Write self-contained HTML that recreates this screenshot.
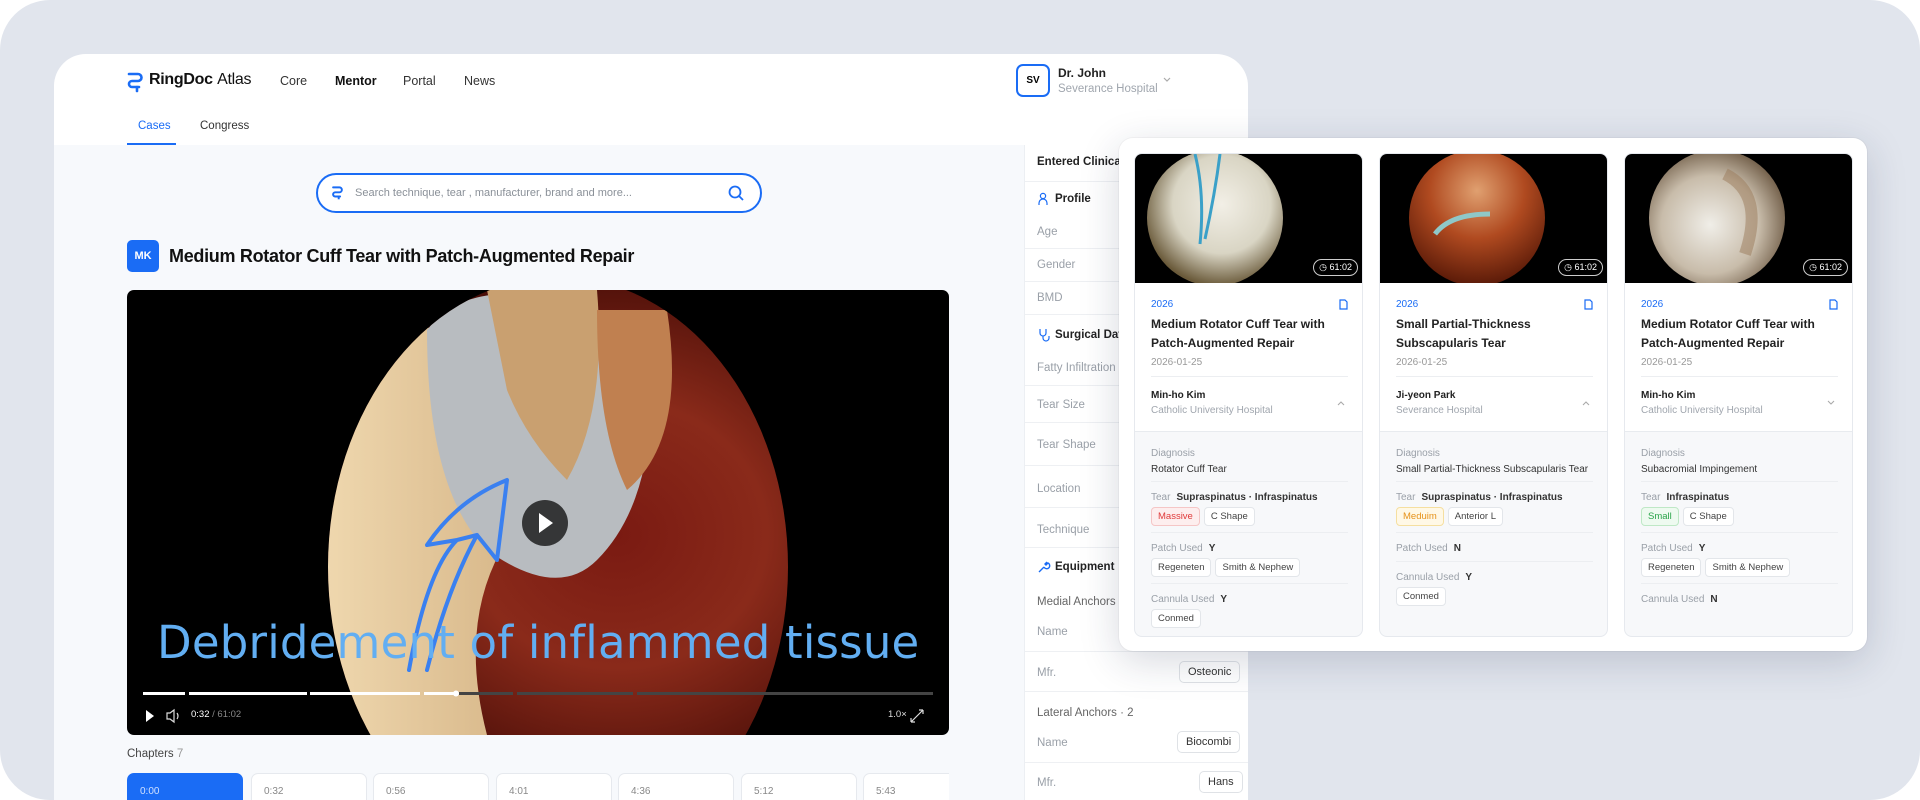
<!DOCTYPE html>
<html><head><meta charset="utf-8"><style>
*{box-sizing:border-box;margin:0;padding:0}
html,body{width:1920px;height:800px;overflow:hidden}
body{background:#fff;font-family:"Liberation Sans",sans-serif;position:relative}
.a{position:absolute}
.bg{left:0;top:0;width:1920px;height:800px;background:#e1e5ed;border-radius:50px}
.main{left:54px;top:54px;width:1194px;height:746px;background:#fff;border-radius:32px 32px 0 0;overflow:hidden}
.nav{font-size:12.5px;color:#333}
.content{left:0;top:91px;width:1194px;height:655px;background:#f7f9fc}
.side{left:970px;top:91px;width:224px;height:655px;background:#fff;border-left:1px solid #eceff3;overflow:hidden}
.srow{position:absolute;left:12px;font-size:11.5px;color:#9aa0a8}
.shd{position:absolute;left:12px;font-size:11.5px;color:#222;font-weight:bold}
.line{position:absolute;left:0;width:224px;height:1px;background:#eef0f3}
.tag{display:inline-block;border:1px solid #e3e6ea;background:#fff;border-radius:4px;font-size:9.5px;color:#444;padding:3px 6px;margin-right:4px}
.stag{position:absolute;border:1px solid #dfe2e6;background:#fff;border-radius:5px;font-size:11px;color:#333;padding:4px 8px}
.panel{left:1119px;top:138px;width:748px;height:513px;background:#fff;border-radius:14px;box-shadow:0 10px 40px rgba(30,40,70,.18),0 0 0 1px rgba(0,0,0,.03)}
.card{position:absolute;top:15px;width:229px;height:484px;border:1px solid #e6e9ee;border-radius:8px;overflow:hidden;background:#f7f8fa}
.img{position:absolute;left:0;top:0;width:229px;height:129px;background:#000;overflow:hidden}
.dur{position:absolute;right:6px;bottom:7px;border:1px solid #ccc;border-radius:9px;color:#fff;font-size:9px;padding:2px 5px;background:rgba(0,0,0,.5)}
.top{position:absolute;left:0;top:129px;width:229px;height:149px;background:#fff;border-bottom:1px solid #e8ebef}
.c{position:absolute;left:16px;font-size:10px}
.lab{color:#9aa0a8}
.val{color:#333;font-weight:bold;margin-left:6px}
.sep{position:absolute;left:16px;width:197px;height:1px;background:#eceef1}
.chs{position:absolute;left:73px;top:719px;width:822px;height:27px;overflow:hidden}
.ch{position:absolute;top:0;width:116px;height:34px;border:1px solid #e6e9ee;border-radius:7px;background:#fff;font-size:10px;color:#888;padding:12px 12px}
</style></head><body>
<div class="a bg"></div>
<div class="a main">
  <svg class="a" style="left:72px;top:17px" width="20" height="22" viewBox="0 0 20 22"><path d="M3 3h9a3.5 3.5 0 0 1 0 7H6a3 3 0 0 0 0 6h7" fill="none" stroke="#1a6cf5" stroke-width="2.6" stroke-linecap="round"/><path d="M11 16v4" stroke="#1a6cf5" stroke-width="2.6" stroke-linecap="round"/></svg>
  <div class="a" style="left:95px;top:17px;font-size:16px;color:#111"><b style="letter-spacing:-.3px">RingDoc</b> <span style="font-weight:normal;letter-spacing:-.3px">Atlas</span></div>
  <div class="a nav" style="left:226px;top:20px">Core</div>
  <div class="a nav" style="left:281px;top:20px;font-weight:bold;color:#111">Mentor</div>
  <div class="a nav" style="left:349px;top:20px">Portal</div>
  <div class="a nav" style="left:410px;top:20px">News</div>
  <div class="a" style="left:962px;top:10px;width:34px;height:33px;border:2px solid #1a6cf5;border-radius:7px;font-size:10px;font-weight:bold;text-align:center;line-height:29px">SV</div>
  <div class="a" style="left:1004px;top:12px;font-size:12px;font-weight:bold;color:#222">Dr. John</div>
  <div class="a" style="left:1004px;top:29px;font-size:11.5px;color:#a0a6ae">Severance Hospital</div>
  <svg class="a" style="left:1108px;top:22px" width="10" height="8"><path d="M2 2l3 3 3-3" fill="none" stroke="#aaa" stroke-width="1.2"/></svg>
  <div class="a" style="left:84px;top:66px;font-size:11.5px;color:#1a6cf5">Cases</div>
  <div class="a" style="left:73px;top:89px;width:49px;height:2px;background:#1a6cf5"></div>
  <div class="a" style="left:146px;top:66px;font-size:11.5px;color:#333">Congress</div>

  <div class="a content"></div>
  <div class="a" style="left:262px;top:119px;width:446px;height:40px;border:2px solid #1a6cf5;border-radius:20px;background:#fff"></div>
  <svg class="a" style="left:277px;top:130px" width="14" height="18" viewBox="0 0 20 22"><path d="M3 3h9a3.5 3.5 0 0 1 0 7H6a3 3 0 0 0 0 6h7" fill="none" stroke="#1a6cf5" stroke-width="2.8" stroke-linecap="round"/><path d="M11 16v4" stroke="#1a6cf5" stroke-width="2.8"/></svg>
  <div class="a" style="left:301px;top:133px;font-size:11px;color:#8a9098">Search technique, tear , manufacturer, brand and more...</div>
  <svg class="a" style="left:673px;top:130px" width="18" height="18"><circle cx="8" cy="8" r="5.5" fill="none" stroke="#1a6cf5" stroke-width="1.8"/><path d="M12 12l4 4" stroke="#1a6cf5" stroke-width="1.8"/></svg>
  <div class="a" style="left:73px;top:186px;width:32px;height:32px;background:#1a6cf5;border-radius:5px;color:#fff;font-size:11px;font-weight:bold;text-align:center;line-height:32px">MK</div>
  <div class="a" style="left:115px;top:192px;font-size:18px;font-weight:bold;color:#111;letter-spacing:-.3px">Medium Rotator Cuff Tear with Patch-Augmented Repair</div>
  <div class="a" style="left:73px;top:236px;width:822px;height:445px;background:#000;border-radius:7px;overflow:hidden">
    <svg width="822" height="445" style="position:absolute;left:0;top:0">
      <defs>
        <radialGradient id="v" cx="0.6" cy="0.55" r="0.6"><stop offset="0" stop-color="#7a1a12"/><stop offset=".5" stop-color="#8a2a1a"/><stop offset="1" stop-color="#4a0e08"/></radialGradient>
        <linearGradient id="w" x1="0" y1="0" x2="1" y2="0"><stop offset="0" stop-color="#f0d9b0"/><stop offset="1" stop-color="#d8b88a"/></linearGradient>
        <clipPath id="cc"><ellipse cx="431" cy="277" rx="230" ry="290"/></clipPath>
      </defs>
      <g clip-path="url(#cc)">
        <rect x="190" y="0" width="500" height="445" fill="url(#v)"/>
        <path d="M190 60 Q300 0 360 80 L380 250 Q330 330 360 445 L190 445Z" fill="url(#w)"/>
        <path d="M300 40 Q340 -10 420 10 L520 30 Q540 200 470 270 Q430 310 360 260 Q300 200 300 40Z" fill="#b8bcc0"/>
        <path d="M360 0 L470 0 Q480 120 440 190 Q400 150 380 100Z" fill="#c9a070"/>
        <path d="M470 20 L540 20 Q560 150 500 200 Q470 140 470 20Z" fill="#c08050"/>
      </g>
      <path d="M282 380 Q300 280 330 250 L300 255 Q330 210 380 190 L370 270 L350 245 Q320 300 300 380 M350 245 L330 250" fill="none" stroke="#3a80f0" stroke-width="4" stroke-linecap="round" stroke-linejoin="round"/>
      <circle cx="418" cy="233" r="23" fill="rgba(20,20,20,.8)"/>
      <path d="M412 223 L426 233 L412 243Z" fill="#fff"/>
      <rect x="16" y="402" width="42" height="3" fill="#fff"/><rect x="62" y="402" width="118" height="3" fill="#fff"/><rect x="183" y="402" width="110" height="3" fill="#fff"/><rect x="297" y="402" width="32" height="3" fill="#fff"/>
      <circle cx="329" cy="403.5" r="3" fill="#fff"/>
      <rect x="332" y="402" width="54" height="3" fill="#444"/><rect x="390" y="402" width="116" height="3" fill="#444"/><rect x="510" y="402" width="296" height="3" fill="#444"/>
      <path d="M19 420l8 6-8 6z" fill="#fff"/>
      <path d="M40 423h3l4-3v12l-4-3h-3z" fill="none" stroke="#ddd" stroke-width="1.2"/>
      <path d="M50 423q2 3 0 6" fill="none" stroke="#ddd" stroke-width="1.2"/>
      <path d="M796 420l-6 6m6-6v4m0-4h-4M784 432l6-6m-6 6v-4m0 4h4" stroke="#ddd" stroke-width="1.2" fill="none"/>
    </svg>
    <div class="a" style="left:30px;top:326px;font-family:'DejaVu Sans',sans-serif;font-size:45px;color:#62aef2;letter-spacing:.2px">Debridement of inflammed tissue</div>
    <div class="a" style="left:64px;top:419px;font-size:9.5px;color:#fff">0:32 <span style="color:#888">/ 61:02</span></div>
    <div class="a" style="left:761px;top:419px;font-size:9.5px;color:#ddd">1.0×</div>
  </div>
  <div class="a" style="left:73px;top:694px;font-size:11.5px;color:#444">Chapters <span style="color:#999">7</span></div>
  <div class="chs">
    <div class="ch" style="left:0;background:#1a6cf5;color:#cfe0ff;border-color:#1a6cf5">0:00</div>
    <div class="ch" style="left:124px">0:32</div>
    <div class="ch" style="left:246px">0:56</div>
    <div class="ch" style="left:369px">4:01</div>
    <div class="ch" style="left:491px">4:36</div>
    <div class="ch" style="left:614px">5:12</div>
    <div class="ch" style="left:736px">5:43</div>
  </div>

  <div class="a side">
    <div class="shd" style="top:11px">Entered Clinical Data</div>
    <div class="line" style="top:36px"></div>
    <svg class="a" style="left:12px;top:47px" width="12" height="14"><circle cx="6" cy="4" r="2.6" fill="none" stroke="#1a6cf5" stroke-width="1.2"/><path d="M2 13v-2a4 4 0 0 1 8 0v2" fill="none" stroke="#1a6cf5" stroke-width="1.2"/></svg>
    <div class="shd" style="left:30px;top:48px">Profile</div>
    <div class="srow" style="top:81px">Age</div><div class="line" style="top:103px"></div>
    <div class="srow" style="top:114px">Gender</div><div class="line" style="top:136px"></div>
    <div class="srow" style="top:147px">BMD</div><div class="line" style="top:169px"></div>
    <svg class="a" style="left:12px;top:183px" width="14" height="14"><path d="M3 1v4a3 3 0 0 0 6 0V1M6 8v2a3 3 0 0 0 6 0V8" fill="none" stroke="#1a6cf5" stroke-width="1.2"/></svg>
    <div class="shd" style="left:30px;top:184px">Surgical Data</div>
    <div class="srow" style="top:217px">Fatty Infiltration</div><div class="line" style="top:240px"></div>
    <div class="srow" style="top:254px">Tear Size</div><div class="line" style="top:277px"></div>
    <div class="srow" style="top:294px">Tear Shape</div><div class="line" style="top:320px"></div>
    <div class="srow" style="top:338px">Location</div><div class="line" style="top:362px"></div>
    <div class="srow" style="top:379px">Technique</div><div class="line" style="top:402px"></div>
    <svg class="a" style="left:12px;top:415px" width="14" height="14"><path d="M2 12l5-5M7 7a3 3 0 1 0 4-4l-2 2-1-1 2-2" fill="none" stroke="#1a6cf5" stroke-width="1.4"/></svg>
    <div class="shd" style="left:30px;top:416px">Equipment</div>
    <div class="srow" style="top:451px;color:#666">Medial Anchors · 3</div>
    <div class="srow" style="top:481px">Name</div><div class="line" style="top:506px"></div>
    <div class="srow" style="top:522px">Mfr.</div><div class="stag" style="left:154px;top:516px">Osteonic</div>
    <div class="line" style="top:546px"></div>
    <div class="srow" style="top:562px;color:#666">Lateral Anchors · 2</div>
    <div class="srow" style="top:592px">Name</div><div class="stag" style="left:152px;top:586px">Biocombi</div>
    <div class="line" style="top:617px"></div>
    <div class="srow" style="top:632px">Mfr.</div><div class="stag" style="left:174px;top:626px">Hans</div>
  </div>
</div>

<div class="a panel">
  <div class="card" style="left:15px">
    <div class="img"><svg width="229" height="129"><defs><radialGradient id="g1" cx=".55" cy=".4" r=".6"><stop offset="0" stop-color="#f2efe6"/><stop offset=".6" stop-color="#d9d5c4"/><stop offset="1" stop-color="#6a5a3a"/></radialGradient></defs><circle cx="80" cy="64" r="68" fill="url(#g1)"/><path d="M60 0 Q70 40 65 90 M85 0 Q80 40 70 85" stroke="#3aa0c8" stroke-width="3" fill="none"/></svg><div class="dur">◷ 61:02</div></div>
    <div class="top">
      <div class="c" style="top:16px;color:#1a6cf5">2026</div>
      <svg class="a" style="right:16px;top:16px" width="9" height="11"><path d="M1 1h5l2 2v7H1z" fill="none" stroke="#1a6cf5" stroke-width="1.2"/></svg>
      <div class="c" style="top:32px;font-size:12px;font-weight:bold;color:#222;line-height:19px;width:200px">Medium Rotator Cuff Tear with Patch-Augmented Repair</div>
      <div class="c" style="top:74px;color:#999">2026-01-25</div>
      <div class="sep" style="top:93px"></div>
      <div class="c" style="top:107px;font-weight:bold;color:#222">Min-ho Kim</div>
      <div class="c" style="top:122px;color:#a0a6ae">Catholic University Hospital</div>
      <svg class="a" style="right:18px;top:116px" width="10" height="8"><path d="M2 6l3-3 3 3" fill="none" stroke="#aaa" stroke-width="1.1"/></svg>
    </div>
    <div class="c lab" style="top:294px">Diagnosis</div>
    <div class="c" style="top:310px;color:#333">Rotator Cuff Tear</div>
    <div class="sep" style="top:327px"></div>
    <div class="c" style="top:338px"><span class="lab">Tear</span><span class="val">Supraspinatus · Infraspinatus</span></div>
    <div class="c" style="top:353px"><span class="tag" style="background:#fdeeee;border-color:#f5c6c6;color:#e03a3a">Massive</span><span class="tag">C Shape</span></div>
    <div class="sep" style="top:378px"></div>
    <div class="c" style="top:389px"><span class="lab">Patch Used</span><span class="val">Y</span></div>
    <div class="c" style="top:404px"><span class="tag">Regeneten</span><span class="tag">Smith &amp; Nephew</span></div>
    <div class="sep" style="top:429px"></div>
    <div class="c" style="top:440px"><span class="lab">Cannula Used</span><span class="val">Y</span></div>
    <div class="c" style="top:455px"><span class="tag">Conmed</span></div>
  </div>
  <div class="card" style="left:260px">
    <div class="img"><svg width="229" height="129"><defs><radialGradient id="g2" cx=".5" cy=".3" r=".7"><stop offset="0" stop-color="#e0a070"/><stop offset=".5" stop-color="#b04a20"/><stop offset="1" stop-color="#5a1a08"/></radialGradient></defs><circle cx="97" cy="64" r="68" fill="url(#g2)"/><path d="M55 80 Q70 60 110 60" stroke="#8fc8c8" stroke-width="5" fill="none"/></svg><div class="dur">◷ 61:02</div></div>
    <div class="top">
      <div class="c" style="top:16px;color:#1a6cf5">2026</div>
      <svg class="a" style="right:16px;top:16px" width="9" height="11"><path d="M1 1h5l2 2v7H1z" fill="none" stroke="#1a6cf5" stroke-width="1.2"/></svg>
      <div class="c" style="top:32px;font-size:12px;font-weight:bold;color:#222;line-height:19px;width:200px">Small Partial-Thickness Subscapularis Tear</div>
      <div class="c" style="top:74px;color:#999">2026-01-25</div>
      <div class="sep" style="top:93px"></div>
      <div class="c" style="top:107px;font-weight:bold;color:#222">Ji-yeon Park</div>
      <div class="c" style="top:122px;color:#a0a6ae">Severance Hospital</div>
      <svg class="a" style="right:18px;top:116px" width="10" height="8"><path d="M2 6l3-3 3 3" fill="none" stroke="#aaa" stroke-width="1.1"/></svg>
    </div>
    <div class="c lab" style="top:294px">Diagnosis</div>
    <div class="c" style="top:310px;color:#333">Small Partial-Thickness Subscapularis Tear</div>
    <div class="sep" style="top:327px"></div>
    <div class="c" style="top:338px"><span class="lab">Tear</span><span class="val">Supraspinatus · Infraspinatus</span></div>
    <div class="c" style="top:353px"><span class="tag" style="background:#fff8e6;border-color:#f5dfa0;color:#e6921a">Meduim</span><span class="tag">Anterior L</span></div>
    <div class="sep" style="top:378px"></div>
    <div class="c" style="top:389px"><span class="lab">Patch Used</span><span class="val">N</span></div>
    <div class="sep" style="top:407px"></div>
    <div class="c" style="top:418px"><span class="lab">Cannula Used</span><span class="val">Y</span></div>
    <div class="c" style="top:433px"><span class="tag">Conmed</span></div>
  </div>
  <div class="card" style="left:505px">
    <div class="img"><svg width="229" height="129"><defs><radialGradient id="g3" cx=".45" cy=".55" r=".6"><stop offset="0" stop-color="#f0eee8"/><stop offset=".6" stop-color="#c8bcaa"/><stop offset="1" stop-color="#6a5640"/></radialGradient></defs><circle cx="92" cy="64" r="68" fill="url(#g3)"/><path d="M100 20 Q140 40 120 100" stroke="#9a7a5a" stroke-width="12" fill="none" opacity=".5"/></svg><div class="dur">◷ 61:02</div></div>
    <div class="top">
      <div class="c" style="top:16px;color:#1a6cf5">2026</div>
      <svg class="a" style="right:16px;top:16px" width="9" height="11"><path d="M1 1h5l2 2v7H1z" fill="none" stroke="#1a6cf5" stroke-width="1.2"/></svg>
      <div class="c" style="top:32px;font-size:12px;font-weight:bold;color:#222;line-height:19px;width:200px">Medium Rotator Cuff Tear with Patch-Augmented Repair</div>
      <div class="c" style="top:74px;color:#999">2026-01-25</div>
      <div class="sep" style="top:93px"></div>
      <div class="c" style="top:107px;font-weight:bold;color:#222">Min-ho Kim</div>
      <div class="c" style="top:122px;color:#a0a6ae">Catholic University Hospital</div>
      <svg class="a" style="right:18px;top:116px" width="10" height="8"><path d="M2 2l3 3 3-3" fill="none" stroke="#aaa" stroke-width="1.1"/></svg>
    </div>
    <div class="c lab" style="top:294px">Diagnosis</div>
    <div class="c" style="top:310px;color:#333">Subacromial Impingement</div>
    <div class="sep" style="top:327px"></div>
    <div class="c" style="top:338px"><span class="lab">Tear</span><span class="val">Infraspinatus</span></div>
    <div class="c" style="top:353px"><span class="tag" style="background:#eefaf0;border-color:#bfe8c6;color:#2aa44a">Small</span><span class="tag">C Shape</span></div>
    <div class="sep" style="top:378px"></div>
    <div class="c" style="top:389px"><span class="lab">Patch Used</span><span class="val">Y</span></div>
    <div class="c" style="top:404px"><span class="tag">Regeneten</span><span class="tag">Smith &amp; Nephew</span></div>
    <div class="sep" style="top:429px"></div>
    <div class="c" style="top:440px"><span class="lab">Cannula Used</span><span class="val">N</span></div>
  </div>
</div>
</body></html>
